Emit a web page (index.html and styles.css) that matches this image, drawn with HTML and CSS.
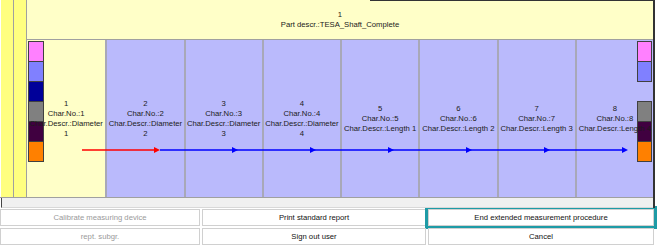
FILE: index.html
```html
<!DOCTYPE html>
<html lang="en">
<head>
    <meta charset="UTF-8">
    <title>Measurement procedure</title>
    <link rel="stylesheet" href="styles.css">
</head>
<body>
    <div class="board">
        <div class="main">
            <div class="strip"></div>
            <div class="strip"></div>
            <div class="part">
                <div class="part-head">
                    <div>1</div>
                    <div>Part descr.:TESA_Shaft_Complete</div>
                </div>
                <div class="cells">
                    <div class="swatches left">
                        <div class="swatch pink"></div>
                        <div class="swatch blue"></div>
                        <div class="swatch navy"></div>
                        <div class="swatch gray"></div>
                        <div class="swatch plum"></div>
                        <div class="swatch orange"></div>
                    </div>
                    <div class="swatches right">
                        <div class="swatch pink"></div>
                        <div class="swatch blue"></div>
                        <div class="swatch none"></div>
                        <div class="swatch gray"></div>
                        <div class="swatch plum"></div>
                        <div class="swatch orange"></div>
                    </div>

                    <div class="cell current">
                        <div class="cell-text"><div>1</div><div>Char.No.:1</div><div>Char.Descr.:Diameter</div><div>1</div></div>
                    </div>
                    <div class="cell">
                        <div class="cell-text"><div>2</div><div>Char.No.:2</div><div>Char.Descr.:Diameter</div><div>2</div></div>
                    </div>
                    <div class="cell">
                        <div class="cell-text"><div>3</div><div>Char.No.:3</div><div>Char.Descr.:Diameter</div><div>3</div></div>
                    </div>
                    <div class="cell">
                        <div class="cell-text"><div>4</div><div>Char.No.:4</div><div>Char.Descr.:Diameter</div><div>4</div></div>
                    </div>
                    <div class="cell">
                        <div class="cell-text"><div>5</div><div>Char.No.:5</div><div>Char.Descr.:Length 1</div></div>
                    </div>
                    <div class="cell">
                        <div class="cell-text"><div>6</div><div>Char.No.:6</div><div>Char.Descr.:Length 2</div></div>
                    </div>
                    <div class="cell">
                        <div class="cell-text"><div>7</div><div>Char.No.:7</div><div>Char.Descr.:Length 3</div></div>
                    </div>
                    <div class="cell">
                        <div class="cell-text"><div>8</div><div>Char.No.:8</div><div>Char.Descr.:Length 4</div></div>
                    </div>

                    <!-- measuring order -->
                    <svg class="flow" width="626" height="157" viewBox="0 0 626 157">
                        <line x1="55" y1="110" x2="128" y2="110" stroke="#ff0000" stroke-width="1.5"/>
                        <polygon points="127,107 133,110 127,113" fill="#ff0000"/>
                        <line x1="133" y1="110" x2="596" y2="110" stroke="#0000ff" stroke-width="1.5"/>
                        <polygon points="205,107 211,110 205,113" fill="#0000ff"/>
                        <polygon points="283,107 289,110 283,113" fill="#0000ff"/>
                        <polygon points="361,107 367,110 361,113" fill="#0000ff"/>
                        <polygon points="439,107 445,110 439,113" fill="#0000ff"/>
                        <polygon points="517,107 523,110 517,113" fill="#0000ff"/>
                        <polygon points="595,107 601,110 595,113" fill="#0000ff"/>
                    </svg>
                </div>
            </div>
        </div>
        <div class="hscroll"></div>
    </div>

    <div class="actions">
        <button disabled>Calibrate measuring device</button>
        <button>Print standard report</button>
        <button class="focus">End extended measurement procedure</button>
        <button disabled>rept. subgr.</button>
        <button>Sign out user</button>
        <button>Cancel</button>
    </div>
</body>
</html>
```

FILE: styles.css
```css
body {
    margin: 0;
    background-color: #fff;
    font-family: "Liberation Sans", Arial, sans-serif;
    font-size: 7.7px;
    color: #1a1a1a;
}
.board {
    position: relative;
    width: 655px;
    border-right: 2px solid #333;
    box-sizing: border-box;
}
.board::before {
    content: "";
    position: absolute;
    top: 0;
    left: 370px;
    right: 0;
    height: 1px;
    background-color: #333;
    z-index: 3;
}
.main {
    display: flex;
    height: 198px;
    border-bottom: 1px solid #a0a0a0;
    box-sizing: border-box;
}
.strip {
    width: 12px;
    background-color: #ffff80;
    border-right: 1px solid #a0a0a0;
}
.strip:first-child {
    margin-left: 1px;
}
.part {
    flex: 1;
    display: flex;
    flex-direction: column;
}
.part-head {
    height: 39px;
    border-bottom: 1px solid #a0a0a0;
    background-color: #ffffc8;
    display: flex;
    flex-direction: column;
    justify-content: center;
    align-items: center;
    line-height: 10px;
}
.cells {
    position: relative;
    flex: 1;
    display: grid;
    grid-template-columns: repeat(8, 1fr);
}
.cell {
    min-width: 0;
    background-color: #babafc;
    border-left: 2px solid #a8a8b8;
    display: flex;
    justify-content: center;
    align-items: center;
    line-height: 10px;
    white-space: nowrap;
}
.cell.current {
    background-color: #ffffc8;
    border-left: none;
}
.cell-text {
    position: relative;
    z-index: 2;
    text-align: center;
}
.swatches {
    position: absolute;
    top: 1px;
    z-index: 1;
    display: flex;
    flex-direction: column;
}
.swatches.left {
    left: 1px;
    width: 16px;
}
.swatches.right {
    right: 1px;
    width: 15px;
}
.swatch {
    height: 21px;
    margin-top: -1px;
    border: 1px solid #404040;
    box-sizing: border-box;
}
.swatch:first-child {
    margin-top: 0;
}
.pink { background-color: #ff80ff; }
.blue { background-color: #8080ff; }
.navy { background-color: #000099; }
.gray { background-color: #808080; }
.plum { background-color: #400040; }
.orange { background-color: #ff8000; }
.swatch.none {
    border-color: transparent;
}
.flow {
    position: absolute;
    left: 0;
    top: 0;
    z-index: 1;
}
.hscroll {
    height: 10px;
    margin-left: 1px;
    border-left: 1px solid #444;
    border-bottom: 1px solid #d8d8d8;
    background-color: #f0f0f0;
    box-sizing: border-box;
}
.actions {
    display: grid;
    grid-template-columns: 200px 224px 226px;
    grid-auto-rows: 17px;
    gap: 2px;
    padding-top: 1px;
}
button {
    font: inherit;
    color: #111;
    background-color: #fff;
    border: 1px solid #d0d0d0;
    border-radius: 0;
    padding: 0;
}
button:disabled {
    color: #9a9a9a;
}
.focus {
    outline: 3px solid #1e9ba6;
}
```
